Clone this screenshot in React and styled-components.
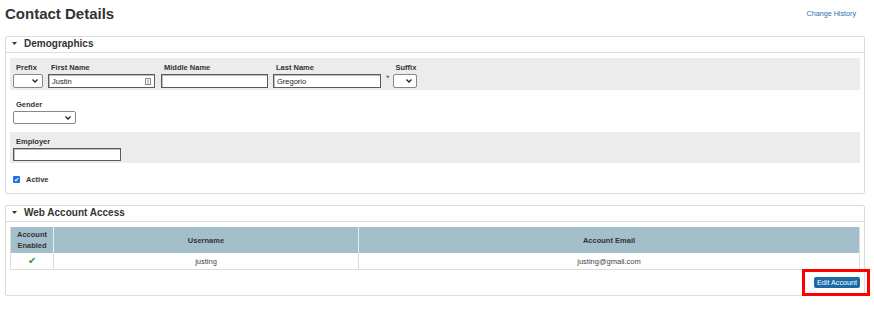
import { createGlobalStyle, styled } from "styled-components";

const GlobalStyle = createGlobalStyle`
  body {
    margin: 0;
    background: #fff;
    font-family: "Liberation Sans", Arial, sans-serif;
    color: #333;
  }
`

const Page = styled.div`
  padding: 0 9px 0 5px;
`

const TopBar = styled.div`
  display: flex;
  justify-content: space-between;
  align-items: center;
  height: 26px;
  margin-bottom: 10px;
`

const Title = styled.h1`
  margin: 0;
  font-size: 15px;
  font-weight: bold;
  color: #333;
`

const HistoryLink = styled.a`
  font-size: 7.2px;
  color: #2f6fb0;
  text-decoration: none;
  margin-right: 9px;
  cursor: pointer;
`

const Panel = styled.section`
  border: 1px solid #ddd;
  border-radius: 2px;
  margin-bottom: ${(p) => p.$gap || 0}px;
`

const PanelHeader = styled.div`
  display: flex;
  align-items: center;
  gap: 7px;
  height: 13px;
  padding: 0 0 2px 6px;
  border-bottom: 1px solid #ddd;
  font-size: 10px;
  font-weight: bold;
  color: #333;
`

const PanelBody = styled.div`
  padding: 5px 4px ${(p) => p.$bottom || 3}px;
`

const FieldRow = styled.div`
  display: flex;
  align-items: flex-end;
  gap: ${(p) => p.$gap || 5}px;
  padding: ${(p) => (p.$shaded ? "4px 3px 2px" : "9px 3px 8px")};
  background: ${(p) => (p.$shaded ? "#ececec" : "transparent")};
`

const Field = styled.div`
  display: flex;
  flex-direction: column;
  margin-left: ${(p) => p.$offset || 0}px;
`

const Label = styled.label`
  font-size: 7.5px;
  font-weight: bold;
  line-height: 12px;
  padding-left: 3px;
  color: #333;
`

const TextBox = styled.div`
  position: relative;
  display: flex;
  align-items: center;
  width: ${(p) => p.$w}px;
  height: ${(p) => p.$h || 14}px;
  box-sizing: border-box;
  border: 1px solid #5a5a5a;
  box-shadow: inset 1px 1px 0 #bbb;
  background: #fff;
  font-size: 7.5px;
  padding-left: 3px;
  color: #222;
`

const InputIcon = styled.svg`
  position: absolute;
  right: 3px;
  top: 3px;
`

const SelectBox = styled.div`
  display: flex;
  align-items: center;
  justify-content: flex-end;
  width: ${(p) => p.$w}px;
  height: ${(p) => p.$h || 14}px;
  box-sizing: border-box;
  border: 1px solid #888;
  border-radius: 2px;
  background: #fff;
  padding-right: 4px;
`

const Asterisk = styled.span`
  font-size: 9px;
  color: #555;
  align-self: center;
  margin-top: 6px;
`

const CheckRow = styled.div`
  display: flex;
  align-items: center;
  gap: 6px;
  padding: 12px 3px 6px;
  font-size: 7.5px;
  font-weight: bold;
`

const CheckBox = styled.span`
  display: inline-flex;
  align-items: center;
  justify-content: center;
  width: 7px;
  height: 7px;
  border-radius: 1px;
  background: #1a73e8;
`

const Table = styled.div`
  display: grid;
  grid-template-columns: 42px 305px 1fr;
  border: 1px solid #ddd;
  border-top: none;
`

const HeadCell = styled.div`
  display: flex;
  align-items: center;
  justify-content: center;
  text-align: center;
  height: 26px;
  background: #a3bfcb;
  font-size: 7.5px;
  font-weight: bold;
  line-height: 11px;
  color: #333;
  border-left: ${(p) => (p.$first ? "none" : "1px solid #e6eef2")};
`

const Cell = styled.div`
  display: flex;
  align-items: center;
  justify-content: center;
  height: 16px;
  font-size: 7.5px;
  color: #444;
  border-left: ${(p) => (p.$first ? "none" : "1px solid #ddd")};
`

const Check = styled.span`
  color: #2c9a2c;
  font-size: 10px;
  line-height: 1;
`

const Actions = styled.div`
  display: flex;
  justify-content: flex-end;
  padding: 7px 0 0;
`

const Highlight = styled.div`
  position: relative;
  &::after {
    content: "";
    position: absolute;
    left: -12px;
    right: -10px;
    top: -8px;
    bottom: -8px;
    border: 3px solid #f00;
    pointer-events: none;
  }
`

const Button = styled.button`
  display: block;
  height: 11px;
  padding: 0 3px;
  border: none;
  border-radius: 2px;
  background: #1b6aa6;
  color: #fff;
  font-family: inherit;
  font-size: 7.2px;
  line-height: 11px;
  cursor: pointer;
`

function Caret() {
  return (
    <svg width="5" height="3" viewBox="0 0 5 3">
      <path d="M0 0 L5 0 L2.5 3 Z" fill="#333" />
    </svg>
  )
}

function Chevron() {
  return (
    <svg width="6" height="4" viewBox="0 0 6 4">
      <path d="M0.5 0.5 L3 3 L5.5 0.5" fill="none" stroke="#222" strokeWidth="1.3" />
    </svg>
  )
}

export default function App() {
  return (
    <Page>
      <GlobalStyle />
      <TopBar>
        <Title>Contact Details</Title>
        <HistoryLink>Change History</HistoryLink>
      </TopBar>

      <Panel $gap={11}>
        <PanelHeader>
          <Caret />
          Demographics
        </PanelHeader>
        <PanelBody>
          <FieldRow $shaded>
            <Field>
              <Label>Prefix</Label>
              <SelectBox $w={30}><Chevron /></SelectBox>
            </Field>
            <Field>
              <Label>First Name</Label>
              <TextBox $w={107}>
                Justin
                <InputIcon width="6" height="7" viewBox="0 0 6 7">
                  <rect x="0.5" y="0.5" width="5" height="6" fill="#fff" stroke="#888" />
                  <rect x="2.5" y="1.5" width="1" height="3" fill="#888" />
                  <rect x="2.5" y="5" width="1" height="1" fill="#888" />
                </InputIcon>
              </TextBox>
            </Field>
            <Field $offset={1}>
              <Label>Middle Name</Label>
              <TextBox $w={107} />
            </Field>
            <Field>
              <Label>Last Name</Label>
              <TextBox $w={108}>Gregorio</TextBox>
            </Field>
            <Asterisk>*</Asterisk>
            <Field $offset={-2}>
              <Label>Suffix</Label>
              <SelectBox $w={24}><Chevron /></SelectBox>
            </Field>
          </FieldRow>

          <FieldRow>
            <Field>
              <Label>Gender</Label>
              <SelectBox $w={63} $h={13}><Chevron /></SelectBox>
            </Field>
          </FieldRow>

          <FieldRow $shaded>
            <Field>
              <Label>Employer</Label>
              <TextBox $w={108} $h={13} />
            </Field>
          </FieldRow>

          <CheckRow>
            <CheckBox>
              <svg width="5" height="5" viewBox="0 0 5 5">
                <path d="M0.8 2.6 L2 3.8 L4.3 1" fill="none" stroke="#fff" strokeWidth="1.1" />
              </svg>
            </CheckBox>
            Active
          </CheckRow>
        </PanelBody>
      </Panel>

      <Panel>
        <PanelHeader>
          <Caret />
          Web Account Access
        </PanelHeader>
        <PanelBody $bottom={7}>
          <Table>
            <HeadCell $first>Account<br />Enabled</HeadCell>
            <HeadCell>Username</HeadCell>
            <HeadCell>Account Email</HeadCell>
            <Cell $first><Check>✔</Check></Cell>
            <Cell>justing</Cell>
            <Cell>justing@gmail.com</Cell>
          </Table>
          <Actions>
            <Highlight>
              <Button>Edit Account</Button>
            </Highlight>
          </Actions>
        </PanelBody>
      </Panel>
    </Page>
  )
}
